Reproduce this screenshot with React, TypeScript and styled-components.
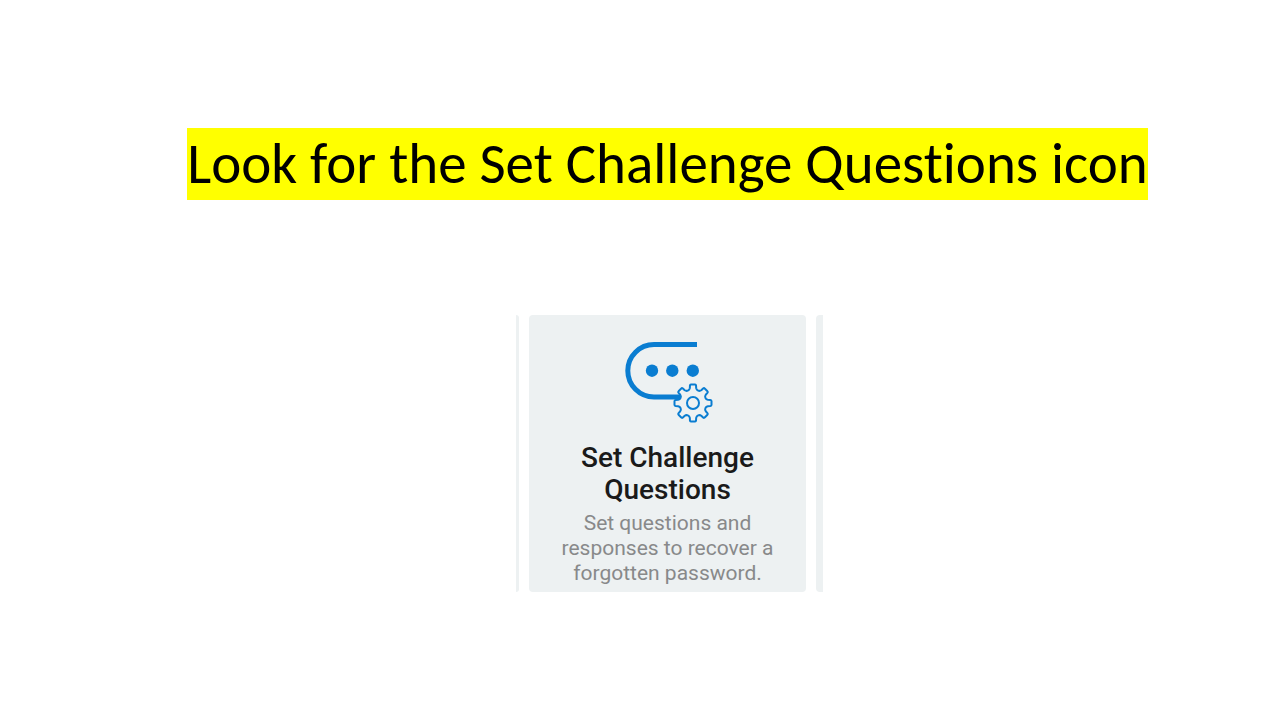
import React from "react";
import styled, { createGlobalStyle } from "styled-components";

const GlobalStyle = createGlobalStyle`
  * { box-sizing: border-box; }
  body { margin: 0; background: #ffffff; }
`;

const Slide = styled.main`
  min-height: 100vh;
  display: flex;
  flex-direction: column;
  align-items: center;
  padding: 128px 0 0 55px;
`;

const Title = styled.h1`
  margin: 0;
  background: #ffff00;
  color: #000000;
  font: 400 57px/72px Carlito, Lato, "Liberation Sans", sans-serif;
  font-variant-ligatures: none;
  text-align: center;
  white-space: nowrap;
`;

const TileRow = styled.section`
  align-self: stretch;
  display: grid;
  grid-template-columns: 1fr 277px 1fr;
  gap: 10px;
  margin-top: 115px;
`;

const Sliver = styled.div<{ $side: "left" | "right" }>`
  width: ${(p) => (p.$side === "left" ? 3 : 7)}px;
  justify-self: ${(p) => (p.$side === "left" ? "end" : "start")};
  border-radius: ${(p) => (p.$side === "left" ? "0 4px 4px 0" : "4px 0 0 4px")};
  background: #edf1f2;
`;

const Tile = styled.a`
  display: flex;
  flex-direction: column;
  align-items: center;
  padding: 25px 24px 6px;
  border-radius: 4px;
  background: #edf1f2;
  font-family: Roboto, "Liberation Sans", sans-serif;
  text-align: center;
  text-decoration: none;
`;

const TileTitle = styled.h2`
  margin: 18px 0 5px;
  color: #1a1a1a;
  font-size: 28px;
  font-weight: 500;
  line-height: 32px;
`;

const TileText = styled.p`
  margin: 0;
  color: #88898a;
  font-size: 21px;
  line-height: 25px;
`;

const point = (radius: number, degrees: number) => {
  const a = (degrees * Math.PI) / 180;
  return `${(69 + radius * Math.sin(a)).toFixed(2)} ${(63 - radius * Math.cos(a)).toFixed(2)}`;
};

const gearPath =
  Array.from({ length: 8 }, (_, i) => {
    const a = i * 45;
    return [
      `${i ? "L" : "M"}${point(17.6, a - 10)}`,
      `Q${point(18.8, a - 9)} ${point(18.6, a - 6)}`,
      `L${point(18.6, a + 6)}`,
      `Q${point(18.8, a + 9)} ${point(17.6, a + 10)}`,
      `L${point(15.2, a + 12)}`,
      `C${point(13, a + 16)} ${point(13, a + 29)} ${point(15.2, a + 33)}`,
    ].join(" ");
  }).join(" ") + "Z";

const ChallengeIcon = () => (
  <svg width="88" height="84" viewBox="0 0 88 84" overflow="visible" fill="none" stroke="#0a7dd1" aria-hidden="true">
    <path d="M73 4.5H30a26.2 26.2 0 0 0 0 52.4H57" strokeWidth="5" />
    <g fill="#0a7dd1" stroke="none">
      <circle cx="28" cy="30.7" r="6.2" />
      <circle cx="48.3" cy="30.7" r="6.2" />
      <circle cx="68.8" cy="30.7" r="6.2" />
    </g>
    <path d={gearPath} fill="#edf1f2" strokeWidth="2" strokeLinejoin="round" />
    <circle cx="69" cy="63" r="6" strokeWidth="2" />
  </svg>
);

export default function App() {
  return (
    <>
      <GlobalStyle />
      <Slide>
        <Title>Look for the Set Challenge Questions icon</Title>
        <TileRow>
          <Sliver $side="left" />
          <Tile href="#challenge-questions">
            <ChallengeIcon />
            <TileTitle>Set Challenge Questions</TileTitle>
            <TileText>Set questions and responses to recover a forgotten password.</TileText>
          </Tile>
          <Sliver $side="right" />
        </TileRow>
      </Slide>
    </>
  );
}
